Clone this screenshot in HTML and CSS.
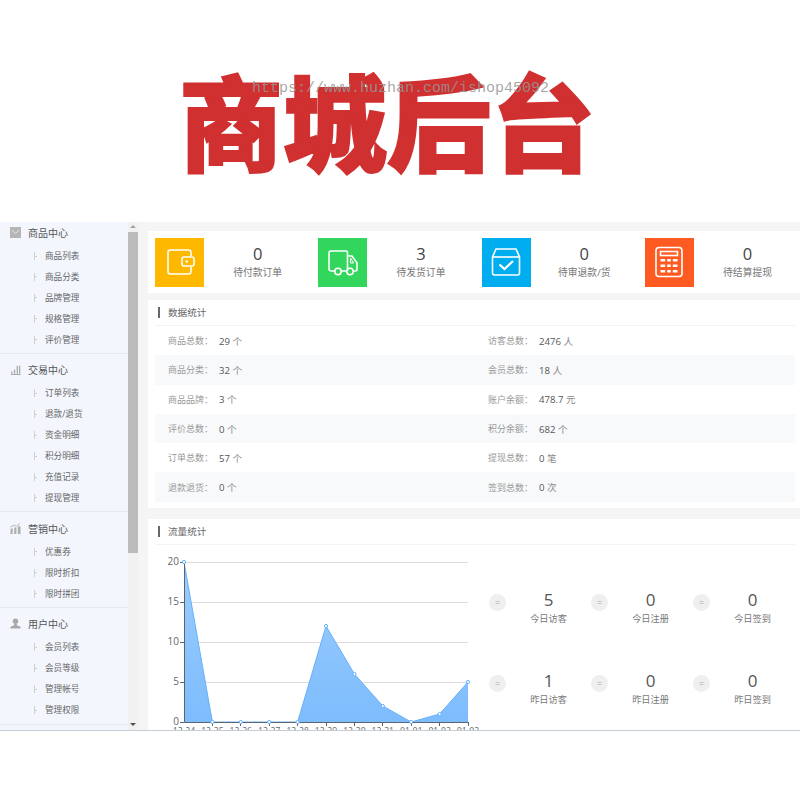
FILE: index.html
```html
<!DOCTYPE html>
<html lang="zh">
<head>
    <meta charset="UTF-8">
    <meta name="viewport" content="width=device-width, initial-scale=1.0">
    <title>商城后台</title>
    <link rel="stylesheet" href="styles.css">
</head>
<body>

<div class="banner">
    <h1 class="banner-title">商城后台</h1>
    <span class="watermark">https://www.huzhan.com/ishop45092</span>
</div>

<div class="app">
    <div class="sidebar">
        <div class="nav-group nav-group-first">
            <div class="nav-head">
                <svg class="nav-icon" viewBox="0 0 12 12"><rect width="12" height="12" fill="#b5b5b5"/><path d="M2 3.5 L6 7 L10 3.5" fill="none" stroke="#e8e8e8" stroke-width="1"/></svg>
                商品中心
            </div>
            <div class="nav-item">商品列表</div>
            <div class="nav-item">商品分类</div>
            <div class="nav-item">品牌管理</div>
            <div class="nav-item">规格管理</div>
            <div class="nav-item">评价管理</div>
        </div>
        <div class="nav-group">
            <div class="nav-head">
                <svg class="nav-icon" viewBox="0 0 12 12"><path d="M1 11.5 H11.5 M2 8 V10.5 M5 6 V10.5 M8 2 V10.5 M10.5 2 V10.5" fill="none" stroke="#a9a9a9" stroke-width="1.4"/></svg>
                交易中心
            </div>
            <div class="nav-item">订单列表</div>
            <div class="nav-item">退款/退货</div>
            <div class="nav-item">资金明细</div>
            <div class="nav-item">积分明细</div>
            <div class="nav-item">充值记录</div>
            <div class="nav-item">提现管理</div>
        </div>
        <div class="nav-group">
            <div class="nav-head">
                <svg class="nav-icon" viewBox="0 0 12 12"><path d="M0.5 12 V6 H3 V12 Z M4.5 12 V5 H7 V12 Z M8.5 12 V3.5 H11.5 V12 Z" fill="#b0b0b0"/><path d="M0.5 4.5 L4 2.5 L7 3.5 L11 0.5" fill="none" stroke="#b0b0b0" stroke-width="1"/></svg>
                营销中心
            </div>
            <div class="nav-item">优惠券</div>
            <div class="nav-item">限时折扣</div>
            <div class="nav-item">限时拼团</div>
        </div>
        <div class="nav-group">
            <div class="nav-head">
                <svg class="nav-icon" viewBox="0 0 12 12"><circle cx="6" cy="3.5" r="3" fill="#a9a9a9"/><path d="M4.5 6 H7.5 V8 L11.5 9.5 V11.5 H0.5 V9.5 L4.5 8 Z" fill="#a9a9a9"/></svg>
                用户中心
            </div>
            <div class="nav-item">会员列表</div>
            <div class="nav-item">会员等级</div>
            <div class="nav-item">管理帐号</div>
            <div class="nav-item">管理权限</div>
        </div>
    </div>

    <div class="scrollbar">
        <div class="scroll-arrow scroll-up"></div>
        <div class="scroll-thumb"></div>
        <div class="scroll-arrow scroll-down"></div>
    </div>

    <div class="main">
        <div class="panel todo-panel">
            <div class="todo">
                <div class="todo-icon bg-yellow">
                    <svg viewBox="0 0 32 32" width="32" height="32" fill="none" stroke="#fff" stroke-width="1.6"><path d="M27 10 V6.5 Q27 4 24.5 4 H6.5 Q4 4 4 6.5 V25.5 Q4 28 6.5 28 H24.5 Q27 28 27 25.5 V21"/><rect x="18" y="11" width="12" height="9" rx="2"/><rect x="21.5" y="14.5" width="2.5" height="2" fill="#fff" stroke="none"/></svg>
                </div>
                <div class="todo-text"><div class="todo-num">0</div><div class="todo-label">待付款订单</div></div>
            </div>
            <div class="todo">
                <div class="todo-icon bg-green">
                    <svg viewBox="0 0 32 32" width="32" height="32" fill="none" stroke="#fff" stroke-width="1.6"><path d="M7.8 25 H4.5 Q2 25 2 23 V7 Q2 5 4 5 H19 Q20.5 5 20.5 7 V25 M14.2 25 H19.8"/><path d="M20.5 10 H25 L30 17 V24 Q30 25 28.5 25 H26.2"/><path d="M23.5 12 L26.5 17 H23.5 Z" stroke-width="1"/><circle cx="11" cy="25.5" r="3.2"/><circle cx="23" cy="25.5" r="3.2"/></svg>
                </div>
                <div class="todo-text"><div class="todo-num">3</div><div class="todo-label">待发货订单</div></div>
            </div>
            <div class="todo">
                <div class="todo-icon bg-blue">
                    <svg viewBox="0 0 32 32" width="32" height="32" fill="none" stroke="#fff" stroke-width="1.6"><path d="M2.5 11 L6 3 H26 L29.5 11 V27 Q29.5 29 27.5 29 H4.5 Q2.5 29 2.5 27 Z"/><path d="M2.5 11 H29.5"/><path d="M9.5 18.5 L14.5 23 L23 15" stroke-width="2.2"/></svg>
                </div>
                <div class="todo-text"><div class="todo-num">0</div><div class="todo-label">待审退款/货</div></div>
            </div>
            <div class="todo">
                <div class="todo-icon bg-orange">
                    <svg viewBox="0 0 32 32" width="32" height="32" fill="none" stroke="#fff" stroke-width="1.6"><rect x="3" y="1.5" width="26" height="29" rx="3"/><rect x="7.5" y="5.5" width="17" height="4"/><path d="M7.5 13 H24.5 V15.5 H7.5 Z M7.5 18.5 H24.5 V21 H7.5 Z M7.5 24 H24.5 V26.5 H7.5 Z" fill="#fff" stroke="none"/><path d="M13.2 12 V28 M18.8 12 V28" stroke="#ff5a22" stroke-width="2"/></svg>
                </div>
                <div class="todo-text"><div class="todo-num">0</div><div class="todo-label">待结算提现</div></div>
            </div>
        </div>

        <div class="panel data-panel">
            <div class="panel-title">数据统计</div>
            <div class="data-row">
                <div class="data-cell"><span class="data-key">商品总数：</span><span class="data-val">29 <i>个</i></span></div>
                <div class="data-cell"><span class="data-key">访客总数：</span><span class="data-val">2476 <i>人</i></span></div>
            </div>
            <div class="data-row">
                <div class="data-cell"><span class="data-key">商品分类：</span><span class="data-val">32 <i>个</i></span></div>
                <div class="data-cell"><span class="data-key">会员总数：</span><span class="data-val">18 <i>人</i></span></div>
            </div>
            <div class="data-row">
                <div class="data-cell"><span class="data-key">商品品牌：</span><span class="data-val">3 <i>个</i></span></div>
                <div class="data-cell"><span class="data-key">账户余额：</span><span class="data-val">478.7 <i>元</i></span></div>
            </div>
            <div class="data-row">
                <div class="data-cell"><span class="data-key">评价总数：</span><span class="data-val">0 <i>个</i></span></div>
                <div class="data-cell"><span class="data-key">积分余额：</span><span class="data-val">682 <i>个</i></span></div>
            </div>
            <div class="data-row">
                <div class="data-cell"><span class="data-key">订单总数：</span><span class="data-val">57 <i>个</i></span></div>
                <div class="data-cell"><span class="data-key">提现总数：</span><span class="data-val">0 <i>笔</i></span></div>
            </div>
            <div class="data-row">
                <div class="data-cell"><span class="data-key">退款退货：</span><span class="data-val">0 <i>个</i></span></div>
                <div class="data-cell"><span class="data-key">签到总数：</span><span class="data-val">0 <i>次</i></span></div>
            </div>
        </div>

        <div class="panel flow-panel">
            <div class="panel-title">流量统计</div>
            <div class="flow-body">
                <svg class="chart" viewBox="0 0 334 192" width="334" height="192">
                    <defs>
                        <linearGradient id="area" x1="0" y1="0" x2="0" y2="1">
                            <stop offset="0" stop-color="#9ccdfd"/>
                            <stop offset="1" stop-color="#7dbcfd"/>
                        </linearGradient>
                    </defs>
                    <g stroke="#dcdcdc" stroke-width="1">
                        <path d="M29 17.5 H313 M29 57.5 H313 M29 97.5 H313 M29 137.5 H313"/>
                    </g>
                    <path d="M29 17 L57.4 177 L85.8 177 L114.2 177 L142.6 177 L171 81 L199.4 129 L227.8 161 L256.2 177 L284.6 169 L313 137 V177 H29 Z" fill="url(#area)"/>
                    <path d="M29 17 L57.4 177 L85.8 177 L114.2 177 L142.6 177 L171 81 L199.4 129 L227.8 161 L256.2 177 L284.6 169 L313 137" fill="none" stroke="#66b1fb" stroke-width="1"/>
                    <path d="M29.5 17 V177.5 H313 M25 17.5 H29 M25 57.5 H29 M25 97.5 H29 M25 137.5 H29 M25 177.5 H29 M57.5 177 V181 M85.5 177 V181 M114.5 177 V181 M142.5 177 V181 M171.5 177 V181 M199.5 177 V181 M227.5 177 V181 M256.5 177 V181 M284.5 177 V181 M313.5 177 V181" fill="none" stroke="#5c6470" stroke-width="1"/>
                    <g fill="#fff" stroke="#66b1fb" stroke-width="1">
                        <circle cx="29" cy="17" r="1.6"/><circle cx="57.4" cy="177" r="1.6"/><circle cx="85.8" cy="177" r="1.6"/><circle cx="114.2" cy="177" r="1.6"/><circle cx="142.6" cy="177" r="1.6"/><circle cx="171" cy="81" r="1.6"/><circle cx="199.4" cy="129" r="1.6"/><circle cx="227.8" cy="161" r="1.6"/><circle cx="256.2" cy="177" r="1.6"/><circle cx="284.6" cy="169" r="1.6"/><circle cx="313" cy="137" r="1.6"/>
                    </g>
                    <g class="chart-text" text-anchor="end">
                        <text x="24" y="20">20</text><text x="24" y="60">15</text><text x="24" y="100">10</text><text x="24" y="140">5</text><text x="24" y="180">0</text>
                    </g>
                    <g class="chart-text chart-text-x" text-anchor="middle">
                        <text x="29" y="189">12-24</text><text x="57.4" y="189">12-25</text><text x="85.8" y="189">12-26</text><text x="114.2" y="189">12-27</text><text x="142.6" y="189">12-28</text><text x="171" y="189">12-29</text><text x="199.4" y="189">12-30</text><text x="227.8" y="189">12-31</text><text x="256.2" y="189">01-01</text><text x="284.6" y="189">01-02</text><text x="313" y="189">01-03</text>
                    </g>
                </svg>
                <div class="stats">
                    <div class="stat"><span class="stat-dot">=</span><div class="stat-text"><div class="stat-num">5</div><div class="stat-label">今日访客</div></div></div>
                    <div class="stat"><span class="stat-dot">=</span><div class="stat-text"><div class="stat-num">0</div><div class="stat-label">今日注册</div></div></div>
                    <div class="stat"><span class="stat-dot">=</span><div class="stat-text"><div class="stat-num">0</div><div class="stat-label">今日签到</div></div></div>
                    <div class="stat"><span class="stat-dot">=</span><div class="stat-text"><div class="stat-num">1</div><div class="stat-label">昨日访客</div></div></div>
                    <div class="stat"><span class="stat-dot">=</span><div class="stat-text"><div class="stat-num">0</div><div class="stat-label">昨日注册</div></div></div>
                    <div class="stat"><span class="stat-dot">=</span><div class="stat-text"><div class="stat-num">0</div><div class="stat-label">昨日签到</div></div></div>
                </div>
            </div>
        </div>
    </div>
</div>

</body>
</html>
```

FILE: styles.css
```css
body {
    margin: 0;
    background-color: white;
    font-family: "Open Sans", "Noto Sans CJK SC", sans-serif;
    color: #555;
}

/* big red heading on top */
.banner {
    position: relative;
    height: 222px;
    box-sizing: border-box;
    padding: 44px 0 0 179px;
}

.banner-title {
    margin: 0;
    font-family: "Noto Sans CJK SC", sans-serif;
    font-size: 104px;
    font-weight: 900;
    line-height: 150px;
    letter-spacing: 0;
    color: #d03030;
    -webkit-text-stroke: 2px #d03030;
    white-space: nowrap;
}

.watermark {
    position: absolute;
    left: 252px;
    top: 80px;
    font-family: "Liberation Mono", monospace;
    font-size: 15px;
    color: rgba(150, 150, 150, 0.85);
    white-space: nowrap;
}

.app {
    display: flex;
    height: 508px;
    overflow: hidden;
    border-bottom: 1px solid #c4ccd6;
    background-color: #f5f5f5;
}

/* left menu */
.sidebar {
    width: 128px;
    flex-shrink: 0;
    overflow: hidden;
    background-color: #f3f6fd;
}

.nav-group {
    padding: 5.5px 0 2.5px;
    border-bottom: 1px solid #e6e9ef;
}

.nav-group-first {
    padding-top: 0;
}

.nav-head {
    display: flex;
    align-items: center;
    gap: 7px;
    height: 21px;
    margin-bottom: 3px;
    padding-left: 10px;
    font-size: 10px;
    color: #555;
}

.nav-icon {
    width: 11px;
    height: 11px;
}

.nav-item {
    position: relative;
    height: 20.9px;
    line-height: 20.9px;
    padding-left: 45px;
    font-size: 8.6px;
    color: #666;
}

.nav-item::before {
    content: "";
    position: absolute;
    left: 34px;
    top: 6px;
    width: 3px;
    height: 8px;
    background: linear-gradient(#cfcfcf, #cfcfcf) left / 1px 100% no-repeat,
                linear-gradient(#cfcfcf, #cfcfcf) left center / 100% 1px no-repeat;
}

.scrollbar {
    display: flex;
    flex-direction: column;
    width: 10px;
    flex-shrink: 0;
    background-color: #f1f1f1;
}

.scroll-arrow {
    position: relative;
    height: 10px;
}

.scroll-up::after,
.scroll-down::after {
    content: "";
    position: absolute;
    left: 2px;
    top: 3px;
    border-left: 3px solid transparent;
    border-right: 3px solid transparent;
}

.scroll-up::after {
    border-bottom: 3px solid #a5a5a5;
}

.scroll-down::after {
    border-top: 3px solid #505050;
}

.scroll-thumb {
    height: 321px;
    background-color: #bcbcbc;
}

.scroll-down {
    margin-top: auto;
}

/* right side */
.main {
    flex: 1;
    min-width: 0;
    padding: 9px 0 0 10px;
}

.panel {
    background-color: white;
}

.todo-panel {
    display: grid;
    grid-template-columns: repeat(4, 163.3px);
    height: 62px;
    margin-bottom: 7px;
}

.todo {
    display: flex;
    align-items: center;
    padding-left: 7px;
}

.todo-icon {
    display: flex;
    align-items: center;
    justify-content: center;
    width: 49px;
    height: 49px;
    flex-shrink: 0;
}

.bg-yellow { background-color: #ffb800; }
.bg-green { background-color: #33d65c; }
.bg-blue { background-color: #00aef0; }
.bg-orange { background-color: #ff5a22; }

.todo-text {
    flex: 1;
    text-align: center;
}

.todo-num {
    font-size: 16.5px;
    line-height: 22px;
    color: #444;
}

.todo-label {
    font-size: 9.8px;
    line-height: 16px;
    color: #777;
}

.panel-title {
    position: relative;
    height: 25px;
    line-height: 25px;
    margin: 0 5px 0 7px;
    padding-left: 13px;
    font-size: 9.6px;
    color: #666;
    border-bottom: 1px solid #f3f3f3;
}

.panel-title::before {
    content: "";
    position: absolute;
    left: 3px;
    top: 7px;
    width: 2px;
    height: 11px;
    background-color: #666;
}

.data-panel {
    height: 208px;
    margin-bottom: 11px;
}

.data-row {
    display: grid;
    grid-template-columns: 320px 1fr;
    height: 29.3px;
    margin: 0 5px 0 7px;
    font-size: 9px;
}

.data-row:nth-child(odd) {
    background-color: #f8f9fb;
}

.data-cell {
    display: flex;
    align-items: center;
    padding-left: 13px;
}

.data-key {
    width: 51px;
    flex-shrink: 0;
    color: #999;
}

.data-val {
    font-size: 9.6px;
    color: #555;
}

.data-val i {
    font-style: normal;
    color: #888;
}

.flow-body {
    display: flex;
    padding-left: 7px;
}

.chart {
    flex-shrink: 0;
}

.chart-text {
    font-size: 10px;
    fill: #666;
    font-family: "Open Sans", sans-serif;
}

.chart-text-x {
    font-size: 8.6px;
}

.stats {
    display: grid;
    grid-template-columns: repeat(3, 102px);
    grid-auto-rows: 81px;
    padding-top: 43px;
}

.stat {
    display: flex;
    align-items: flex-start;
    height: 40px;
}

.stat-dot {
    width: 17px;
    height: 17px;
    margin-top: 6px;
    flex-shrink: 0;
    border-radius: 50%;
    background-color: #efefef;
    color: #aaa;
    font-size: 9px;
    line-height: 17px;
    text-align: center;
}

.stat-text {
    flex: 1;
    text-align: center;
}

.stat-num {
    font-size: 17px;
    line-height: 24px;
    color: #555;
}

.stat-label {
    font-size: 9.2px;
    line-height: 14px;
    color: #777;
}
```
